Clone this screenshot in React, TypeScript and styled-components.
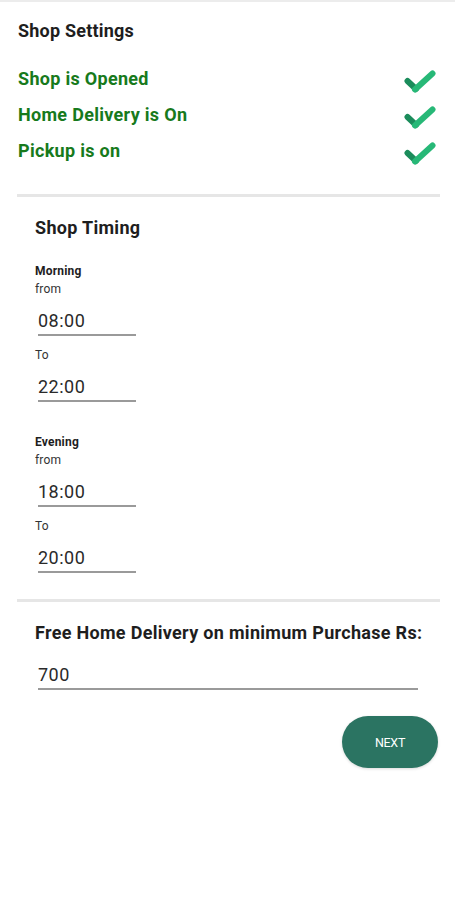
import React from "react";
import styled, { createGlobalStyle } from "styled-components";

const GlobalStyle = createGlobalStyle`
  body {
    margin: 0;
    background: #fff;
    font-family: Roboto, "Liberation Sans", sans-serif;
  }
`;

const Page = styled.div`
  width: 455px;
  min-height: 900px;
  border-top: 2px solid #ececec;
  box-sizing: border-box;
`;

const Header = styled.div`
  padding: 0 19px 0 18px;
`;

const PageTitle = styled.h2`
  margin: 19px 0 0;
  font-size: 18px;
  line-height: 20px;
  font-weight: 700;
  letter-spacing: 0.2px;
  color: #1e1e1e;
`;

const StatusList = styled.div`
  margin-top: 19px;
`;

const StatusRow = styled.div`
  display: flex;
  align-items: center;
  justify-content: space-between;
  height: 36px;
`;

const StatusText = styled.span`
  font-size: 18px;
  font-weight: 700;
  letter-spacing: 0.3px;
  color: #177a1c;
`;

const CheckWrap = styled.span`
  display: flex;
  margin-top: 7px;
`;

const Divider = styled.hr<{ gap: number }>`
  margin: ${(p) => p.gap}px 15px 0 17px;
  border: 0;
  height: 3px;
  background: #e6e6e6;
`;

const Section = styled.section`
  padding: 0 17px 0 35px;
`;

const SectionTitle = styled.h3<{ gap: number }>`
  margin: ${(p) => p.gap}px 0 0;
  font-size: 18px;
  line-height: 22px;
  font-weight: 700;
  letter-spacing: 0.3px;
  color: #1e1e1e;
  white-space: nowrap;
`;

const BlockLabel = styled.div<{ gap: number }>`
  margin-top: ${(p) => p.gap}px;
  font-size: 12px;
  line-height: 18px;
  font-weight: 700;
  letter-spacing: 0.2px;
  color: #1e1e1e;
`;

const SmallLabel = styled.div<{ gap: number }>`
  margin-top: ${(p) => p.gap}px;
  font-size: 12px;
  line-height: 18px;
  letter-spacing: 0.2px;
  color: #333;
`;

const ValueInput = styled.div<{ width: number; gap: number }>`
  width: ${(p) => p.width}px;
  margin: ${(p) => p.gap}px 0 0 3px;
  padding: 4px 0 3px;
  font-size: 18px;
  line-height: 20px;
  letter-spacing: 0.5px;
  color: #2a2a2a;
  border-bottom: 2px solid #9a9a9a;
`;

const ButtonRow = styled.div`
  display: flex;
  justify-content: flex-end;
  margin-top: 26px;
  padding-right: 17px;
`;

const NextButton = styled.button`
  width: 96px;
  height: 52px;
  border: 0;
  border-radius: 26px;
  background: #2b7462;
  color: #fff;
  font-family: Roboto, "Liberation Sans", sans-serif;
  font-size: 12.5px;
  font-weight: 400;
  letter-spacing: -0.3px;
  box-shadow: 0 1px 3px rgba(0, 0, 0, 0.15);
`;

const Check = () => (
  <svg width="32" height="24" viewBox="0 0 32 24">
    <line x1="3.5" y1="11" x2="12" y2="19" stroke="#1b8c5b" strokeWidth="6" strokeLinecap="round" />
    <line x1="11" y1="19.5" x2="28.5" y2="3.5" stroke="#27b877" strokeWidth="6" strokeLinecap="round" />
  </svg>
);

const statuses = ["Shop is Opened", "Home Delivery is On", "Pickup is on"];

const TimeBlock = ({
  label,
  from,
  to,
  gap,
}: {
  label: string;
  from: string;
  to: string;
  gap: number;
}) => (
  <>
    <BlockLabel gap={gap}>{label}</BlockLabel>
    <SmallLabel gap={0}>from</SmallLabel>
    <ValueInput width={98} gap={9}>{from}</ValueInput>
    <SmallLabel gap={10}>To</SmallLabel>
    <ValueInput width={98} gap={9}>{to}</ValueInput>
  </>
);

export default function App() {
  return (
    <Page>
      <GlobalStyle />
      <Header>
        <PageTitle>Shop Settings</PageTitle>
        <StatusList>
          {statuses.map((s) => (
            <StatusRow key={s}>
              <StatusText>{s}</StatusText>
              <CheckWrap>
                <Check />
              </CheckWrap>
            </StatusRow>
          ))}
        </StatusList>
      </Header>
      <Divider gap={26} />
      <Section>
        <SectionTitle gap={20}>Shop Timing</SectionTitle>
        <TimeBlock label="Morning" from="08:00" to="22:00" gap={23} />
        <TimeBlock label="Evening" from="18:00" to="20:00" gap={31} />
      </Section>
      <Divider gap={26} />
      <Section>
        <SectionTitle gap={20}>Free Home Delivery on minimum Purchase Rs:</SectionTitle>
        <ValueInput width={380} gap={17}>700</ValueInput>
      </Section>
      <ButtonRow>
        <NextButton>NEXT</NextButton>
      </ButtonRow>
    </Page>
  );
}
